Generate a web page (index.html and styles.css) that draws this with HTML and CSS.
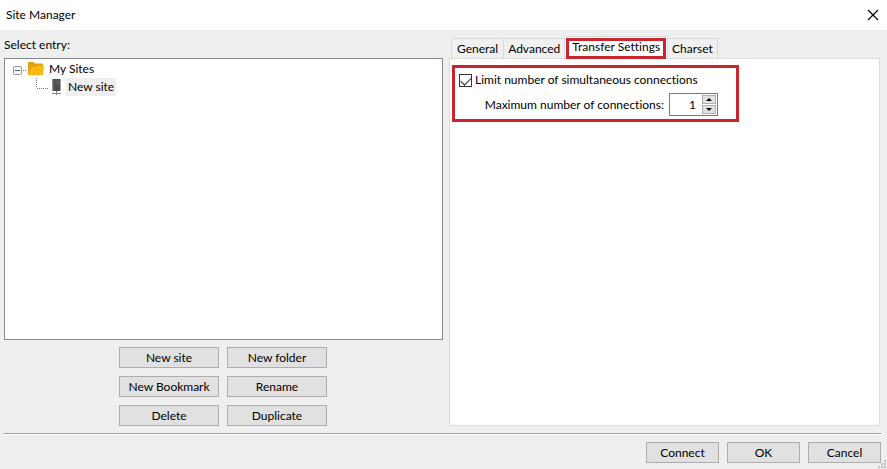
FILE: index.html
```html
<!DOCTYPE html>
<html lang="en">
<head>
<meta charset="utf-8">
<title>Site Manager</title>
<link rel="stylesheet" href="styles.css">
</head>
<body>
<header class="titlebar">
  <h1>Site Manager</h1>
  <button class="close" type="button" aria-label="Close">
    <svg width="12" height="12" viewBox="0 0 12 12"><path d="M1 1l10 10M11 1L1 11" stroke="#000" stroke-width="1.2" fill="none"/></svg>
  </button>
</header>
<main class="content">
  <section class="sites">
    <h2 class="label">Select entry:</h2>
    <ul class="tree">
      <li class="node">
        <svg class="expander" width="14" height="18" viewBox="0 0 14 18"><rect x=".5" y="6.500" width="8" height="8" rx="1" fill="#fafafa" stroke="#919191"/><path d="M2 10.500h5" stroke="#3f5c9a"/><path d="M10 10.500h4" stroke="#777" stroke-dasharray="1 1"/></svg>
        <svg class="folder" width="18" height="18" viewBox="0 0 18 18"><path d="M1 3q0-1 1-1h4.500l1.500 1.500h7q1 0 1 1v10H2q-1 0-1-1z" fill="#e0a010"/><path d="M5 7h4l1.500-1.500H16q1 0 1 1l-.8 7.800q-.1 1-1 1H2q-1 0-.8-1L4 8q.2-1 1-1z" fill="#fdbb12"/></svg>
        <span>My Sites</span>
      </li>
      <li class="node child">
        <svg class="branch" width="12" height="18" viewBox="0 0 12 18"><path d="M.5 0v10M1 10.500h11" stroke="#777" stroke-dasharray="1 1" fill="none"/></svg>
        <svg class="server" width="11" height="18" viewBox="0 0 11 18"><rect x="1.500" y="1" width="8" height="12" fill="#4b504c"/><path d="M2 1v12" stroke="#777"/><path d="M4 3.500h4M6 5.500h2" stroke="#2f9b43"/><path d="M5.500 13v4M1 15.500h9" stroke="#6f8794"/></svg>
        <span class="selected">New site</span>
      </li>
    </ul>
    <div class="actions">
      <button type="button">New site</button>
      <button type="button">New folder</button>
      <button type="button">New Bookmark</button>
      <button type="button">Rename</button>
      <button type="button">Delete</button>
      <button type="button">Duplicate</button>
    </div>
  </section>
  <section class="settings">
    <div class="tabs" role="tablist">
      <button class="tab" type="button" role="tab">General</button>
      <button class="tab" type="button" role="tab">Advanced</button>
      <button class="tab active" type="button" role="tab" aria-selected="true">Transfer Settings</button>
      <button class="tab" type="button" role="tab">Charset</button>
    </div>
    <div class="page" role="tabpanel">
      <div class="limits">
        <label class="check"><input type="checkbox" checked>Limit number of simultaneous connections</label>
        <div class="maximum">
          <label for="max">Maximum number of connections:</label>
          <div class="spinner">
            <input id="max" type="text" inputmode="numeric" value="1">
            <div class="steps">
              <button type="button" aria-label="Increase"><svg width="6" height="3" viewBox="0 0 6 3"><path d="M0 3l3-3 3 3z"/></svg></button>
              <button type="button" aria-label="Decrease"><svg width="6" height="3" viewBox="0 0 6 3"><path d="M0 0l3 3 3-3z"/></svg></button>
            </div>
          </div>
        </div>
      </div>
    </div>
  </section>
</main>
<footer class="footer">
  <button type="button">Connect</button>
  <button type="button">OK</button>
  <button type="button">Cancel</button>
  <svg class="grip" width="8" height="8" viewBox="0 0 8 8"><path d="M6 0h2v2H6zM3 3h2v2H3zM6 3h2v2H6zM0 6h2v2H0zM3 6h2v2H3zM6 6h2v2H6z" fill="#bfbfbf"/></svg>
</footer>
</body>
</html>
```
FILE: styles.css
```css
* { box-sizing: border-box; }

body {
  margin: 0;
  min-height: 100vh;
  display: flex;
  flex-direction: column;
  background: #efefef;
  color: #000;
  font: 12px/18px Lato, "Open Sans", sans-serif;
  font-variant-ligatures: none;
}

h1, h2 { margin: 0; font: inherit; }

button, input { font: inherit; color: inherit; }

h1, h2, button, input { font-variant-ligatures: none; }

button {
  height: 21px;
  padding: 0;
  border: 1px solid #adadad;
  background: #e1e1e1;
  line-height: 18px;
}

svg { display: block; flex: none; }

.titlebar {
  height: 30px;
  padding: 0 8px 0 6px;
  display: flex;
  align-items: center;
  justify-content: space-between;
  background: #fff;
}

.close { border: 0; background: none; }

.content {
  flex: 1;
  display: grid;
  grid-template-columns: 439fr 431fr;
  gap: 6px;
  padding: 6px 7px 7px 4px;
}

.sites, .settings { display: flex; flex-direction: column; }

.label { height: 22px; }

.tree {
  flex: 1;
  margin: 0;
  padding: 1px 8px;
  list-style: none;
  border: 1px solid #828790;
  background: #fff;
}

.node { display: flex; align-items: center; height: 18px; }
.node > span { margin-left: 4px; }
.child { padding-left: 23px; }
.branch { margin-right: 3px; }
.child > .selected { padding: 0 2px; background: #efefef; }

.actions {
  display: grid;
  grid-template-columns: 100px 100px;
  justify-content: center;
  gap: 8px;
  padding: 7px 1px 0 0;
}

.tabs {
  display: flex;
  align-items: flex-end;
  height: 22px;
  padding-left: 2px;
}

.tab {
  height: 20px;
  padding: 0 4px;
  border: 1px solid #d9d9d9;
  border-bottom: 0;
  border-left-width: 0;
  background: #f0f0f0;
  white-space: nowrap;
}

.tab:first-child { padding: 0 5px; border-left-width: 1px; }

.tab.active {
  position: relative;
  height: 22px;
  padding: 0 7px 2px;
  background: #fff;
}

.tab.active::after {
  content: "";
  position: absolute;
  inset: 1px 1px -1px;
  border: 3px solid #c9252f;
}

.page {
  flex: 1;
  padding: 6px 2px;
  border: 1px solid #dcdcdc;
  background: #fff;
}

.limits {
  width: 287px;
  height: 57px;
  padding: 3px 4px;
  border: 3px solid #c9252f;
}

.check { display: flex; align-items: center; gap: 3px; white-space: nowrap; }

.check input {
  appearance: none;
  flex: none;
  width: 13px;
  height: 13px;
  margin: 0;
  border: 1px solid #333;
  background: #fff;
}

.check input:checked::before {
  content: "";
  display: block;
  width: 9px;
  height: 5px;
  margin: 2px 1px;
  border: solid #222;
  border-width: 0 0 1px 1px;
  transform: rotate(-45deg);
}

.maximum {
  display: flex;
  align-items: center;
  justify-content: flex-end;
  gap: 5px;
  margin: 4px 14px 0 0;
  white-space: nowrap;
}

.spinner {
  display: flex;
  width: 49px;
  height: 23px;
  border: 1px solid #7a7a7a;
}

.spinner input {
  flex: 1;
  min-width: 0;
  padding: 0 5px;
  border: 0;
  text-align: right;
}

.steps {
  display: flex;
  flex-direction: column;
  gap: 1px;
  padding: 1px;
}

.steps button {
  flex: 1;
  width: 14px;
  height: auto;
  display: grid;
  place-items: center;
}

.footer {
  position: relative;
  display: flex;
  justify-content: flex-end;
  gap: 8px;
  margin: 0 6px 0 4px;
  padding: 8px 0 6px;
  border-top: 1px solid #a0a0a0;
  box-shadow: inset 0 1px #fff;
}

.footer button { width: 73px; }

.grip { position: absolute; right: -5px; bottom: 1px; }
```
